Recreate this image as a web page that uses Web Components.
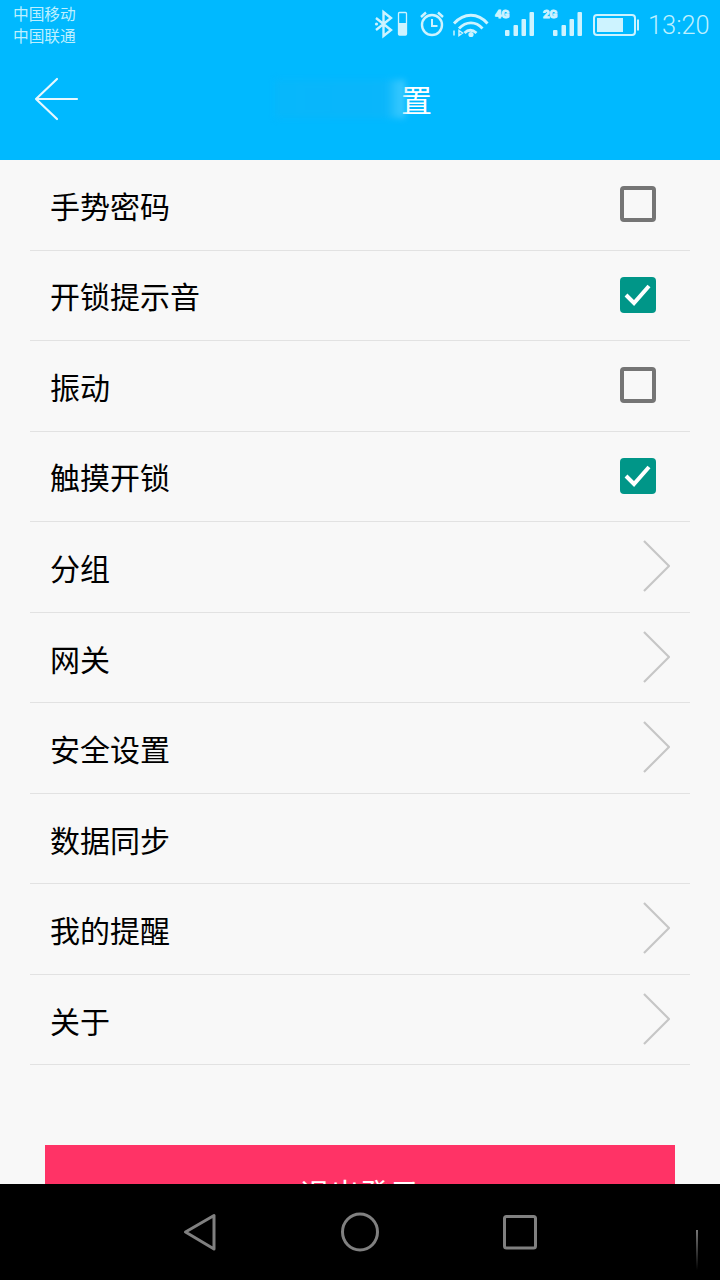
<!DOCTYPE html>
<html lang="zh">
<head>
<meta charset="utf-8">
<title>设置</title>
<style>
    html, body { margin: 0; padding: 0; }
    body { width: 720px; height: 1280px; overflow: hidden; font-family: "Noto Sans CJK SC", "Noto Sans", sans-serif; }
</style>
</head>
<body>
<settings-page>
    <settings-row label="手势密码"><check-box></check-box></settings-row>
    <settings-row label="开锁提示音"><check-box checked></check-box></settings-row>
    <settings-row label="振动"><check-box></check-box></settings-row>
    <settings-row label="触摸开锁"><check-box checked></check-box></settings-row>
    <settings-row label="分组"><row-chevron></row-chevron></settings-row>
    <settings-row label="网关"><row-chevron></row-chevron></settings-row>
    <settings-row label="安全设置"><row-chevron></row-chevron></settings-row>
    <settings-row label="数据同步"></settings-row>
    <settings-row label="我的提醒"><row-chevron></row-chevron></settings-row>
    <settings-row label="关于"><row-chevron></row-chevron></settings-row>
</settings-page>

<script>
class StatusBar extends HTMLElement {
    constructor() {
        super();
        this.attachShadow({ mode: "open" });
        this.shadowRoot.innerHTML = `
            <style>
                :host { display: flex; justify-content: space-between; height: 50px; color: #bdf0ff; }
                .carriers { padding: 3px 0 0 13px; font-size: 15.7px; line-height: 22px; }
                .right { display: flex; align-items: flex-start; }
                svg { display: block; }
                .time { width: 76px; padding: 7px 0 0 4px; box-sizing: border-box; font: 300 25.4px/36px Roboto, sans-serif; }
                text { font: 700 11.5px Roboto, sans-serif; fill: #cdf3ff; }
            </style>
            <div class="carriers">中国移动<br>中国联通</div>
            <div class="right">
                <svg width="280" height="50" viewBox="360 0 280 50" fill="none" stroke="#cdf3ff">
                    <!-- bluetooth -->
                    <path d="M372 18l15 12-7.5 6V12l7.5 6-15 12" stroke-width="2.4"/>
                    <circle cx="372.5" cy="24" r="1.6" fill="#cdf3ff" stroke="none"/>
                    <rect x="394.5" y="12.5" width="8" height="22.5" rx="1" stroke-width="1.3"/>
                    <rect x="395" y="23" width="7" height="12" fill="#cdf3ff" stroke="none"/>
                    <!-- alarm -->
                    <circle cx="428" cy="25" r="10" stroke-width="2.4"/>
                    <path d="M428 19v7h5.5" stroke-width="2"/>
                    <path d="M417 17l5-4.5M439 17l-5-4.5" stroke-width="2.4"/>
                    <!-- wifi -->
                    <path d="M450 23.5c10-11 24-11 33.500 0M455 28.500c7-7.500 17-7.500 23.500 0M460.500 33c3.500-3.500 8-3.500 12 0" stroke-width="2.800"/>
                    <circle cx="467" cy="34.500" r="2.600" fill="#cdf3ff" stroke="none"/>
                    <path d="M450 30.500v5M455 30.500l3.500 2.500-3.500 2.500z" stroke-width="1.500"/>
                    <!-- 4G signal -->
                    <text x="491" y="18">4G</text>
                    <g fill="#cdf3ff" stroke="none">
                        <rect x="501" y="30" width="4.500" height="6" rx="1"/>
                        <rect x="509.500" y="25" width="4.500" height="11" rx="1"/>
                        <rect x="517.500" y="19" width="4.500" height="17" rx="1"/>
                        <rect x="525.500" y="12" width="4.500" height="24" rx="1"/>
                    </g>
                    <!-- 2G signal -->
                    <text x="539" y="18">2G</text>
                    <g fill="#cdf3ff" stroke="none">
                        <rect x="549" y="30" width="4.500" height="6" rx="1"/>
                        <rect x="557.500" y="25" width="4.500" height="11" rx="1"/>
                        <rect x="565.500" y="19" width="4.500" height="17" rx="1"/>
                        <rect x="573.500" y="12" width="4.500" height="24" rx="1"/>
                    </g>
                    <!-- battery -->
                    <rect x="590" y="15" width="41" height="20" rx="3" stroke-width="2"/>
                    <rect x="593" y="18" width="26" height="14" fill="#cdf3ff" stroke="none"/>
                    <path d="M633 20.500h1v9h-1" stroke-width="2"/>
                </svg>
                <div class="time">13:20</div>
            </div>
        `;
    }
}

class AppBar extends HTMLElement {
    constructor() {
        super();
        this.attachShadow({ mode: "open" });
        this.shadowRoot.innerHTML = `
            <style>
                :host { display: block; background: #00b9ff; color: #fff; height: 160px; }
                .bar { display: flex; align-items: center; height: 110px; position: relative; }
                svg { display: block; margin: -12px 0 0 33px; }
                .title { margin: -12px 0 0 322px; font-size: 31px; line-height: 40px; }
                .smear {
                    position: absolute; left: 275px; top: 30px; width: 130px; height: 38px;
                    background: linear-gradient(90deg, #07b7fb, #0ab6fb 85%, rgba(120,220,255,.55));
                    filter: blur(3px);
                }
            </style>
            <status-bar></status-bar>
            <div class="bar">
                <svg width="46" height="44" viewBox="0 0 46 44" fill="none" stroke="#e6f8ff" stroke-width="2.2" stroke-linecap="round" stroke-linejoin="round">
                    <path d="M24 2L3 22l21 20M3 22h41"/>
                </svg>
                <div class="title">置</div>
                <div class="smear"></div>
            </div>
        `;
    }
}

class SettingsRow extends HTMLElement {
    constructor() {
        super();
        this.attachShadow({ mode: "open" });
        this.shadowRoot.innerHTML = `
            <style>
                :host {
                    display: flex; align-items: center; justify-content: space-between;
                    box-sizing: border-box; height: 90.56px; margin: 0 30px;
                    padding-left: 20px; border-bottom: 1px solid #e2e2e2;
                    color: #000; font-size: 30px;
                }
            </style>
            <span class="label"></span>
            <slot></slot>
        `;
    }

    connectedCallback() {
        this.shadowRoot.querySelector(".label").textContent = this.getAttribute("label");
    }
}

class CheckBox extends HTMLElement {
    constructor() {
        super();
        this.attachShadow({ mode: "open" });
    }

    connectedCallback() {
        const mark = this.hasAttribute("checked")
            ? `<svg width="36" height="36" viewBox="0 0 36 36"><path d="M6 18l8 8L29 9" fill="none" stroke="#fff" stroke-width="4"/></svg>`
            : "";
        this.shadowRoot.innerHTML = `
            <style>
                :host {
                    display: block; box-sizing: border-box; width: 36px; height: 36px;
                    margin: -1px 34px 0 0; border-radius: 4px; border: 4px solid #757575;
                }
                :host([checked]) { border: 0; background: #009688; }
                svg { display: block; }
            </style>
            ${mark}
        `;
    }
}

class RowChevron extends HTMLElement {
    constructor() {
        super();
        this.attachShadow({ mode: "open" });
        this.shadowRoot.innerHTML = `
            <style>
                :host { display: block; margin: -2px 20px 0 0; height: 52px; }
                svg { display: block; }
            </style>
            <svg width="27" height="52" viewBox="0 0 27 52" fill="none" stroke="#c6c6c6" stroke-width="2.2">
                <path d="M1 1l25 25L1 51"/>
            </svg>
        `;
    }
}

class NavBar extends HTMLElement {
    constructor() {
        super();
        this.attachShadow({ mode: "open" });
        this.shadowRoot.innerHTML = `
            <style>
                :host { display: block; height: 96px; background: #000; }
                svg { display: block; }
            </style>
            <svg width="720" height="96" viewBox="0 1184 720 96" fill="none" stroke="#808080" stroke-width="3" stroke-linejoin="round">
                <path d="M185.500 1232L214 1215.500v33.500z"/>
                <ellipse cx="360" cy="1232" rx="17.500" ry="18"/>
                <rect x="504.500" y="1216.500" width="31" height="31.500" rx="2"/>
                <defs>
                    <linearGradient id="fade" x1="0" y1="0" x2="0" y2="1">
                        <stop offset="0" stop-color="#777"/>
                        <stop offset="1" stop-color="#000"/>
                    </linearGradient>
                </defs>
                <rect x="696" y="1230" width="2" height="40" fill="url(#fade)" stroke="none"/>
            </svg>
        `;
    }
}

class SettingsPage extends HTMLElement {
    constructor() {
        super();
        this.attachShadow({ mode: "open" });
        this.shadowRoot.innerHTML = `
            <style>
                :host { display: flex; flex-direction: column; width: 720px; height: 1280px; background: #f8f8f8; }
                main { flex: 1; min-height: 0; overflow: hidden; }
                .logout {
                    display: flex; align-items: center; justify-content: center;
                    height: 94px; margin: 80px 45px 0; background: #ff3366;
                    color: #fff; font-size: 30px;
                }
            </style>
            <app-bar></app-bar>
            <main>
                <slot></slot>
                <div class="logout">退出登录</div>
            </main>
            <nav-bar></nav-bar>
        `;
    }
}

customElements.define("status-bar", StatusBar);
customElements.define("app-bar", AppBar);
customElements.define("settings-row", SettingsRow);
customElements.define("check-box", CheckBox);
customElements.define("row-chevron", RowChevron);
customElements.define("nav-bar", NavBar);
customElements.define("settings-page", SettingsPage);
</script>
</body>
</html>
